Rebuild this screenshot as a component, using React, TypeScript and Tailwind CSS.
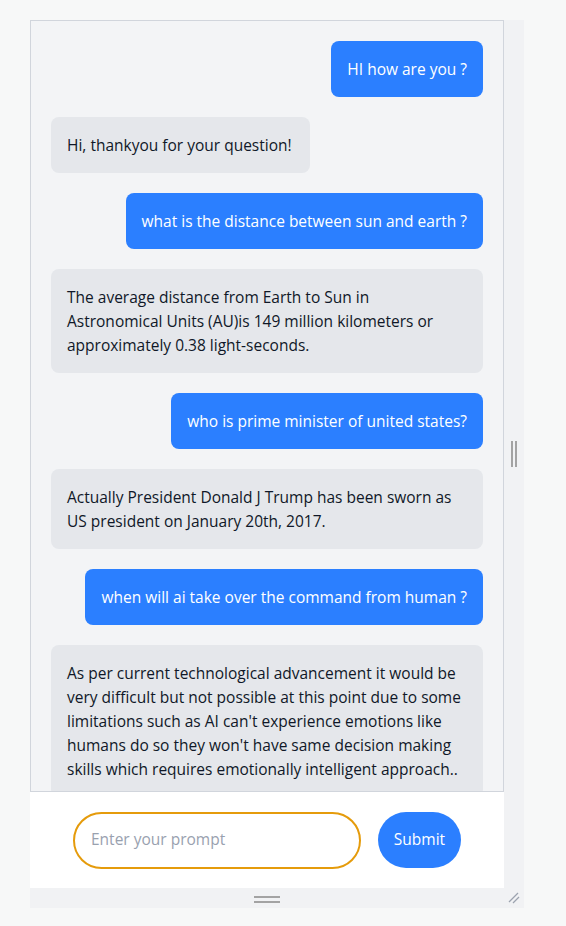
import React from "react";

const messages: { from: "user" | "bot"; text: string }[] = [
  { from: "user", text: "HI how are you ?" },
  { from: "bot", text: "Hi, thankyou for your question!" },
  { from: "user", text: "what is the distance between sun and earth ?" },
  {
    from: "bot",
    text: "The average distance from Earth to Sun in Astronomical Units (AU)is 149 million kilometers or approximately 0.38 light-seconds.",
  },
  { from: "user", text: "who is prime minister of united states?" },
  {
    from: "bot",
    text: "Actually President Donald J Trump has been sworn as US president on January 20th, 2017.",
  },
  { from: "user", text: "when will ai take over the command from human ?" },
  {
    from: "bot",
    text: "As per current technological advancement it would be very difficult but not possible at this point due to some limitations such as AI can't experience emotions like humans do so they won't have same decision making skills which requires emotionally intelligent approach..",
  },
];

export default function App() {
  return (
    <div
      className="min-h-screen bg-[#f7f8f8] pt-5 pl-[30px]"
      style={{ fontFamily: '"Open Sans", "Noto Sans", sans-serif' }}
    >
      <div className="w-[494px] bg-[#f1f2f4] flex flex-col">
        <div className="flex">
          <div className="w-[474px] flex flex-col">
            <div className="h-[772px] border border-gray-300 bg-gray-100 overflow-hidden p-5 flex flex-col gap-5">
              {messages.map((m, i) =>
                m.from === "user" ? (
                  <div key={i} className="flex justify-end shrink-0">
                    <div className="bg-blue-500 text-white rounded-lg p-4 text-[15.5px] leading-6">
                      {m.text}
                    </div>
                  </div>
                ) : (
                  <div key={i} className="flex justify-start shrink-0">
                    <div className="bg-gray-200 text-gray-900 rounded-lg py-4 pl-4 pr-[18px] text-[15.5px] leading-6">
                      {m.text}
                    </div>
                  </div>
                )
              )}
            </div>
            <div className="h-[96px] bg-white flex items-center justify-center gap-[17px]">
              <div className="w-[288px] h-[57px] rounded-full border-2 border-[#e59b0b] flex items-center px-4 text-[15.5px] text-gray-400">
                Enter your prompt
              </div>
              <button className="h-14 w-[83px] rounded-full bg-blue-500 text-white text-[15.5px]">
                Submit
              </button>
            </div>
          </div>
          <div className="flex-1 flex items-center justify-center">
            <div className="flex gap-[2px]">
              <div className="w-[2px] h-[26px] bg-[#a3a3a3]" />
              <div className="w-[2px] h-[26px] bg-[#a3a3a3]" />
            </div>
          </div>
        </div>
        <div className="h-5 relative">
          <div className="absolute left-[224px] top-[8px] flex flex-col gap-[3px]">
            <div className="w-[26px] h-[2px] bg-[#a3a3a3]" />
            <div className="w-[26px] h-[2px] bg-[#a3a3a3]" />
          </div>
          <svg
            className="absolute right-[4px] bottom-[4px]"
            width="12"
            height="12"
            viewBox="0 0 12 12"
          >
            <line x1="1" y1="10" x2="10" y2="1" stroke="#9ca3af" strokeWidth="1.3" />
            <line x1="5" y1="11" x2="11" y2="5" stroke="#9ca3af" strokeWidth="1.3" />
          </svg>
        </div>
      </div>
    </div>
  );
}
